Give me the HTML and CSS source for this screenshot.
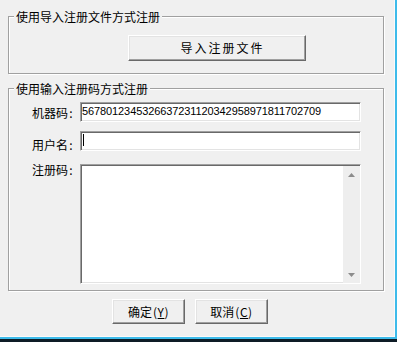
FILE: index.html
```html
<!DOCTYPE html>
<html lang="zh-CN">
<head>
<meta charset="utf-8">
<title>注册</title>
<link rel="stylesheet" href="styles.css">
</head>
<body>
<div class="frame">
  <div class="client">
    <div class="group g1">
      <span class="legend">使用导入注册文件方式注册</span>
      <button class="btn btn-import" type="button">导入注册文件</button>
    </div>
    <div class="group g2">
      <span class="legend">使用输入注册码方式注册</span>
      <div class="form">
        <div class="row r1">
          <label class="lbl">机器码<span class="colon">:</span></label>
          <div class="field mono">5678012345326637231120342958971811702709</div>
        </div>
        <div class="row r2">
          <label class="lbl">用户名<span class="colon">:</span></label>
          <div class="field"><span class="caret"></span></div>
        </div>
        <div class="row r3">
          <label class="lbl">注册码<span class="colon">:</span></label>
          <div class="field memo">
            <div class="memo-body"></div>
            <div class="vscroll">
              <div class="arrow"><svg width="7" height="4" viewBox="0 0 7 4"><polygon points="3.5,0 7,4 0,4" fill="#8c8c8c"/></svg></div>
              <div class="arrow"><svg width="7" height="4" viewBox="0 0 7 4"><polygon points="0,0 7,0 3.5,4" fill="#8c8c8c"/></svg></div>
            </div>
          </div>
        </div>
      </div>
    </div>
    <div class="actions">
      <button class="btn btn-small" type="button">确定<span class="mn">(<u>Y</u>)</span></button>
      <button class="btn btn-small" type="button">取消<span class="mn">(<u>C</u>)</span></button>
    </div>
  </div>
</div>
</body>
</html>
```
FILE: styles.css
```css
html, body {
  margin: 0;
  padding: 0;
}
body {
  width: 397px;
  height: 342px;
  overflow: hidden;
  background: #0e1c26;
  font-family: "Noto Sans CJK SC", "Noto Sans", sans-serif;
  font-size: 12px;
  color: #000;
}
.frame {
  width: 395px;
  height: 337px;
  background: #f0f0f0;
  border-right: 2px solid #3dbbea;
  border-bottom: 2px solid #3dbbea;
  box-shadow: inset -1px -1px 0 #fafafa;
}
.client {
  padding: 16px 0 0 8px;
}
.group {
  position: relative;
  box-sizing: border-box;
  width: 376px;
  border: 1px solid #a0a0a0;
  box-shadow: inset 1px 1px 0 #fff, 1px 1px 0 #fff;
}
.legend {
  position: absolute;
  top: -7px;
  left: 5px;
  padding: 0 2px;
  line-height: 14px;
  background: #f0f0f0;
  white-space: nowrap;
}
.g1 {
  height: 58px;
  padding: 18px 0 0 119px;
}
.g2 {
  height: 203px;
  margin-top: 14px;
}
.btn {
  box-sizing: border-box;
  margin: 0;
  padding: 0;
  background: #f0f0f0;
  border: 1px solid;
  border-color: #fff #696969 #696969 #fff;
  box-shadow: inset -1px -1px 0 #a0a0a0, inset 1px 1px 0 #e3e3e3;
  font-family: inherit;
  font-size: 12px;
  line-height: 14px;
  color: #000;
  text-align: center;
}
.btn-import {
  width: 178px;
  height: 26px;
  letter-spacing: 2px;
  padding-left: 11px;
}
.form {
  padding: 13px 0 0 23px;
}
.row {
  display: flex;
}
.r2 {
  margin-top: 9px;
}
.r3 {
  margin-top: 12px;
}
.lbl {
  width: 48px;
  line-height: 14px;
  white-space: nowrap;
}
.colon {
  display: inline-block;
  width: 6px;
  text-align: center;
}
.r1 .lbl {
  padding-top: 4px;
}
.r2 .lbl {
  padding-top: 7px;
}
.r3 .lbl {
  margin-top: -1px;
}
.field {
  box-sizing: border-box;
  width: 281px;
  height: 20px;
  background: #fff;
  border: 1px solid;
  border-color: #a0a0a0 #fff #fff #a0a0a0;
  box-shadow: inset 1px 1px 0 #696969, inset -1px -1px 0 #e3e3e3;
  padding-left: 1px;
}
.mono {
  font-family: "Liberation Sans", Arial, sans-serif;
  font-size: 11px;
  letter-spacing: -0.1px;
  line-height: 17px;
  white-space: nowrap;
}
.caret {
  display: block;
  width: 1px;
  height: 12px;
  margin: 2px 0 0 1px;
  background: #000;
}
.memo {
  display: flex;
  height: 120px;
  padding: 1px 0 0 1px;
}
.memo-body {
  flex: 1;
}
.vscroll {
  width: 17px;
  display: flex;
  flex-direction: column;
  justify-content: space-between;
  background: #eeeeee;
}
.arrow {
  height: 17px;
  display: flex;
  align-items: center;
  justify-content: center;
}
.arrow svg {
  display: block;
}
.actions {
  display: flex;
  gap: 10px;
  margin-top: 8px;
  padding-left: 104px;
}
.btn-small {
  width: 73px;
  height: 25px;
}
.mn {
  margin-left: 1px;
  letter-spacing: 0.5px;
}
.mn u {
  text-underline-offset: 1px;
}
```
